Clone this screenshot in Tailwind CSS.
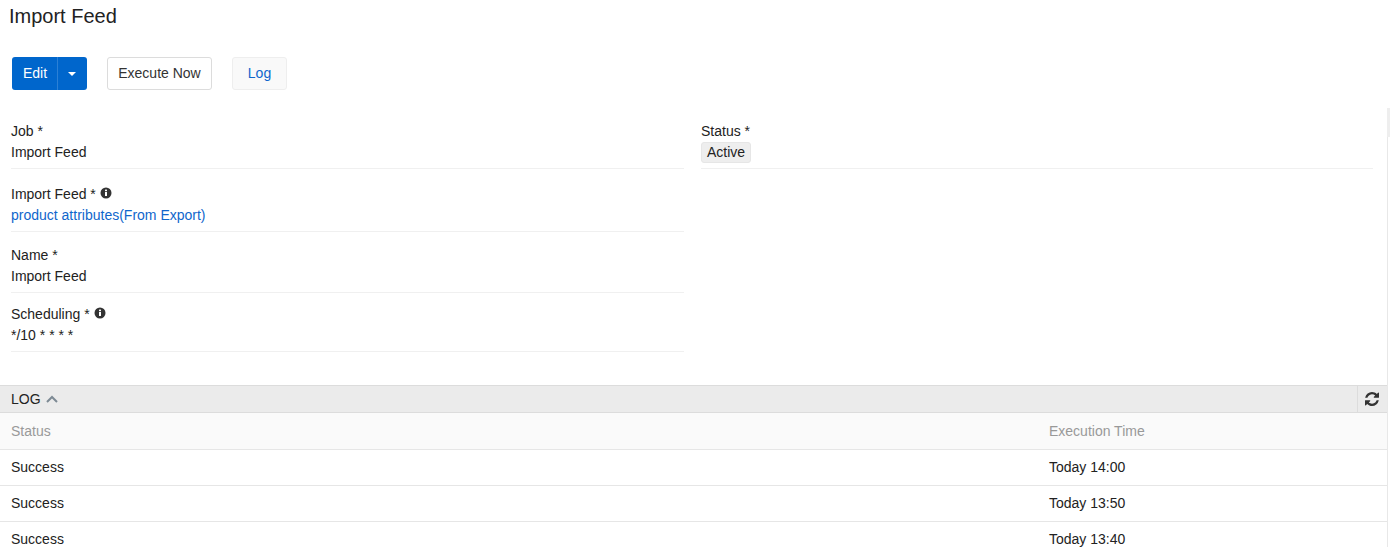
<!DOCTYPE html>
<html lang="en">

<head>
    <meta charset="UTF-8">
    <title>Import Feed</title>
    <script src="https://cdn.jsdelivr.net/npm/@tailwindcss/browser@4"></script>
</head>

<body class="bg-white h-[547px] overflow-hidden font-['Liberation_Sans',Arial,sans-serif] text-[14px] leading-[20px] text-[#222]">
    <h1 class="pl-[9px] pt-[4px] h-[57px] text-[20px] leading-[24px] font-normal text-[#222]">Import Feed</h1>

    <div class="flex pl-[12px] h-[51px]">
        <div class="flex h-[33px] w-[75px] rounded-[3px] bg-[#0066cc] text-white">
            <button class="w-[45px] pl-[1px] pb-[2px] text-center">Edit</button>
            <button class="flex-1 flex items-center justify-center border-l border-[#2b80d6] pr-[2px]">
                <span class="w-0 h-0 border-x-[4px] border-x-transparent border-t-[4px] border-t-white"></span>
            </button>
        </div>
        <button class="ml-[20px] h-[33px] w-[105px] pb-[2px] rounded-[3px] border border-[#dcdcdc] bg-white text-[#333]">Execute Now</button>
        <button class="ml-[20px] h-[33px] w-[55px] pb-[2px] rounded-[3px] border border-[#eeeeee] bg-[#f9f9f9] text-[#0f66cc]">Log</button>
    </div>

    <div class="relative w-[1388px] h-[439px] border-r border-[#e8e8e8]">
        <!-- scrollbar thumb -->
        <div class="absolute top-0 right-[-3px] w-[3px] h-[29px] bg-[#eeeeee]"></div>

        <div class="flex pl-[11px] h-[277px]">
            <div class="w-[673px]">
                <div class="pt-[13px] h-[61px] border-b border-[#f0f0f0]">
                    <div>Job *</div>
                    <div class="mt-[1px]">Import Feed</div>
                </div>
                <div class="pt-[15px] h-[63px] border-b border-[#f0f0f0]">
                    <div class="flex items-center gap-[4px]">Import Feed *
                        <svg class="w-[12px] h-[12px] mb-[3px]" viewBox="0 0 12 12"><circle cx="6" cy="6" r="5.500" fill="#333"/><rect x="5" y="5" width="2" height="4" fill="#fff"/><rect x="5" y="2.600" width="2" height="1.600" fill="#fff"/></svg>
                    </div>
                    <div class="mt-[1px] text-[#0f66cc]">product attributes(From Export)</div>
                </div>
                <div class="pt-[13px] h-[61px] border-b border-[#f0f0f0]">
                    <div>Name *</div>
                    <div class="mt-[1px]">Import Feed</div>
                </div>
                <div class="pt-[11px] h-[59px] border-b border-[#f0f0f0]">
                    <div class="flex items-center gap-[4px]">Scheduling *
                        <svg class="w-[12px] h-[12px] mb-[3px]" viewBox="0 0 12 12"><circle cx="6" cy="6" r="5.500" fill="#333"/><rect x="5" y="5" width="2" height="4" fill="#fff"/><rect x="5" y="2.600" width="2" height="1.600" fill="#fff"/></svg>
                    </div>
                    <div class="mt-[1px]">*/10 * * * *</div>
                </div>
            </div>
            <div class="ml-[17px] w-[672px]">
                <div class="pt-[13px] h-[61px] border-b border-[#f0f0f0]">
                    <div>Status *</div>
                    <span class="inline-block mt-[1px] h-[21px] px-[5px] rounded-[3px] bg-[#eeeeee] border border-[#e6e6e6] leading-[19px]">Active</span>
                </div>
            </div>
        </div>

        <div class="flex items-center justify-between h-[28px] bg-[#ebebeb] border-y border-[#dcdcdc]">
            <div class="flex items-center pl-[11px] gap-[5px]">LOG
                <svg class="w-[12px] h-[8px]" viewBox="0 0 12 8" fill="none" stroke="#7d8a94" stroke-width="2"><path d="M1 7l5-5 5 5"/></svg>
            </div>
            <div class="flex items-center justify-center w-[30px] h-full border-l border-[#dcdcdc] pr-[1px]">
                <svg class="w-[14px] h-[14px]" viewBox="0 0 1536 1536" fill="#333"><path d="M1511 928q0 5-1 7-64 268-268 434.500T764 1536q-146 0-282.500-55T238 1324l-129 129q-19 19-45 19t-45-19-19-45V960q0-26 19-45t45-19h448q26 0 45 19t19 45-19 45l-137 137q71 66 161 102t187 36q134 0 250-65t186-179q11-17 53-117 8-23 30-23h192q13 0 22.500 9.500t9.500 22.500zm25-800v448q0 26-19 45t-45 19h-448q-26 0-45-19t-19-45 19-45l138-138Q969 256 768 256q-134 0-250 65T332 500q-11 17-53 117-8 23-30 23H50q-13 0-22.500-9.500T18 608v-7q65-268 270-434.500T768 0q146 0 284 55.500T1297 212l130-129q19-19 45-19t45 19 19 45z"/></svg>
            </div>
        </div>

        <div class="grid grid-cols-[1038px_1fr] pl-[11px] h-[37px] items-center bg-[#fafafa] border-b border-[#e6e6e6] text-[#999]">
            <div>Status</div>
            <div>Execution Time</div>
        </div>
        <div class="grid grid-cols-[1038px_1fr] pl-[11px] pb-[2px] h-[36px] items-center border-b border-[#e6e6e6]">
            <div>Success</div>
            <div>Today 14:00</div>
        </div>
        <div class="grid grid-cols-[1038px_1fr] pl-[11px] pb-[2px] h-[36px] items-center border-b border-[#e6e6e6]">
            <div>Success</div>
            <div>Today 13:50</div>
        </div>
        <div class="grid grid-cols-[1038px_1fr] pl-[11px] pb-[2px] h-[36px] items-center border-b border-[#e6e6e6]">
            <div>Success</div>
            <div>Today 13:40</div>
        </div>
    </div>
</body>

</html>
